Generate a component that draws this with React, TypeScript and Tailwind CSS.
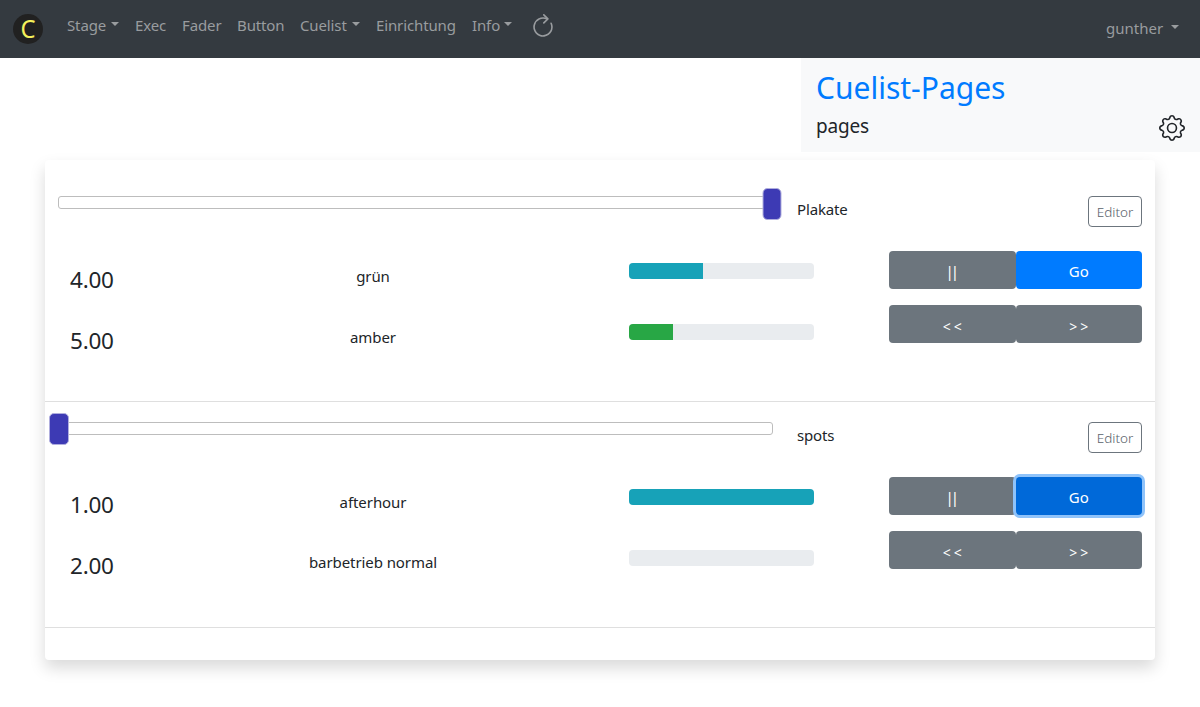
import React from "react";
import { BsGear } from "react-icons/bs";

const Caret = ({ className = "" }: { className?: string }) => (
  <span className={`inline-block border-x-[4.5px] border-t-[4.5px] border-x-transparent border-t-current ${className}`} />
);

const NavItem = ({ label, caret, width }: { label: string; caret?: boolean; width: string }) => (
  <a className={`flex items-center whitespace-nowrap tracking-[-0.008em] ${width}`}>
    {label}
    {caret && <Caret className="-mt-0.5 ml-auto" />}
  </a>
);

type Cue = { no: string; name: string; value: number; color: string };
type List = { name: string; level: number; focused: boolean; cues: Cue[] };

const lists: List[] = [
  {
    name: "Plakate",
    level: 100,
    focused: false,
    cues: [
      { no: "4.00", name: "grün", value: 40, color: "bg-[#17a2b8]" },
      { no: "5.00", name: "amber", value: 24, color: "bg-[#28a745]" },
    ],
  },
  {
    name: "spots",
    level: 0,
    focused: true,
    cues: [
      { no: "1.00", name: "afterhour", value: 100, color: "bg-[#17a2b8]" },
      { no: "2.00", name: "barbetrieb normal", value: 0, color: "bg-[#28a745]" },
    ],
  },
];

const Slider = ({ level }: { level: number }) => (
  <div className="relative ml-[13px] mt-5 h-[13px] w-[715px] rounded-[3px] border border-[#bdbdbd] bg-white">
    <div
      className={`absolute h-8 -translate-x-1/2 rounded-[5px] border border-[#b0aede] bg-[#3d3ab4] ${
        level === 0 ? "-top-[10px] left-0 w-5" : "-top-[9px] left-[712.5px] w-[19px]"
      }`}
    />
  </div>
);

const Btn = ({ children, className = "bg-[#6c757d]" }: { children: React.ReactNode; className?: string }) => (
  <button className={`h-[38px] flex-1 rounded-[4px] pt-0.5 text-[15px] text-white ${className}`}>{children}</button>
);

const Section = ({ list }: { list: List }) => (
  <section className="flex h-[226px] flex-col border-b border-[#dfdfdf]">
    <div className="flex h-[75px]">
      <Slider level={list.level} />
      <div className="ml-6 mt-[21px] flex-1 text-[15px] leading-6 tracking-[-0.01em]">{list.name}</div>
      <button className="mr-[13px] mt-5 h-[31px] w-[54px] rounded-[4px] border border-[#6c757d] pt-0.5 text-[13.5px] font-light text-[#59626a]">
        Editor
      </button>
    </div>
    <div className="flex">
      <div className="flex w-[844px] flex-col">
        {list.cues.map((cue, i) => (
          <div key={cue.no} className="flex h-[61px]">
            <div
              className={`w-[188px] pl-[25px] text-[22.5px] leading-9 tracking-[-0.01em] ${
                list.focused ? "pt-2.5" : "pt-[11px]"
              }`}
            >
              {cue.no}
            </div>
            <div
              className={`w-[280px] text-center text-[15px] leading-6 tracking-[-0.005em] ${
                list.focused && i === 1 ? "pt-3" : "pt-[13px]"
              }`}
            >
              {cue.name}
            </div>
            <div className="ml-[116px] mt-3 h-4 w-[185px] overflow-hidden rounded-[4px] bg-[#e9ecef]">
              <div className={`h-full ${cue.color}`} style={{ width: `${cue.value}%` }} />
            </div>
          </div>
        ))}
      </div>
      <div className="flex w-[253px] flex-col gap-4">
        <div className="flex">
          <Btn>
            <span className="-ml-[3px] tracking-[-3px]">||</span>
          </Btn>
          <Btn className={list.focused ? "bg-[#0069d9] shadow-[0_0_0_3px_#8fc3fa]" : "bg-[#007bff]"}>Go</Btn>
        </div>
        <div className="flex">
          <Btn className="bg-[#6c757d] pt-1">
            <span className="-mr-[3px] text-[14px] tracking-[3px]">&lt;&lt;</span>
          </Btn>
          <Btn className="bg-[#6c757d] pt-1">
            <span className="-mr-[3px] text-[14px] tracking-[3px]">&gt;&gt;</span>
          </Btn>
        </div>
      </div>
    </div>
  </section>
);

export default function App() {
  return (
    <div className="h-[707px] w-[1200px] overflow-hidden bg-white font-['Noto_Sans',sans-serif] text-[#212529]">
      <header className="flex h-[58px] bg-[#343a40] text-[15px] text-[#999c9f]">
        <div className="ml-[13px] mt-3.5 flex h-[30px] w-[30px] items-center justify-center rounded-full bg-[#212121] text-[25px] leading-[30px] text-[#f4f15c]">
          <span className="-mt-0.5 scale-x-95">C</span>
        </div>
        <nav className="ml-6 flex h-[50px] gap-4">
          <NavItem label="Stage" caret width="w-[52px]" />
          <NavItem label="Exec" width="w-[31px]" />
          <NavItem label="Fader" width="w-[39px]" />
          <NavItem label="Button" width="w-[47px]" />
          <NavItem label="Cuelist" caret width="w-[60px]" />
          <NavItem label="Einrichtung" width="w-[80px]" />
          <NavItem label="Info" caret width="w-[40px]" />
        </nav>
        <svg viewBox="0 0 16 16" className="ml-[18px] mt-3.5 h-[26px] w-[26px]" fill="currentColor">
          <path d="M3.17 6.706a5 5 0 0 1 7.103-3.16.5.5 0 1 0 .454-.892A6 6 0 1 0 13.455 5.5a.5.5 0 0 0-.91.417 5 5 0 1 1-9.375.789z" />
          <path d="M8.147.146a.5.5 0 0 1 .707 0l2.5 2.5a.5.5 0 0 1 0 .708l-2.5 2.5a.5.5 0 1 1-.707-.708L10.293 3 8.147.854a.5.5 0 0 1 0-.708z" />
        </svg>
        <div className="ml-auto mr-[21px] flex h-14 w-[73px] items-center">
          gunther
          <Caret className="-mt-0.5 ml-auto" />
        </div>
      </header>
      <div className="ml-auto flex h-[94px] w-[399px] bg-[#f8f9fa]">
        <div className="flex-1 pl-[15px] pt-[11px]">
          <h1 className="text-[30px] leading-[38px] text-[#007bff]">Cuelist-Pages</h1>
          <p className="mt-[7px] text-[19px] leading-6 tracking-[-0.01em]">pages</p>
        </div>
        <BsGear className="mr-[15px] mt-[57px] h-[26px] w-[26px]" />
      </div>
      <main className="mx-[45px] mt-2 h-[500px] rounded-[4px] pt-4 shadow-[0_8px_16px_rgba(0,0,0,0.15)]">
        {lists.map((list) => (
          <Section key={list.name} list={list} />
        ))}
      </main>
    </div>
  );
}
